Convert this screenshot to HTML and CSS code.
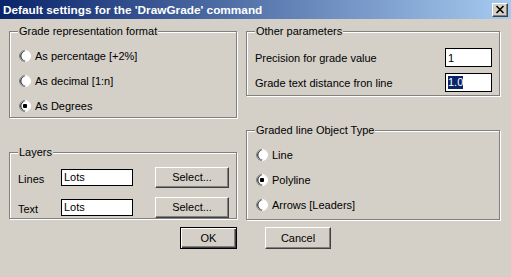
FILE: index.html
```html
<!DOCTYPE html>
<html lang="en">
  <head>
    <meta charset="UTF-8" />
    <title>Default settings for the 'DrawGrade' command</title>
    <link rel="stylesheet" href="styles.css">
  </head>
  <body>
    <div class="dialog">
      <!-- Title bar -->
      <div class="titlebar">
        <span class="title">Default settings for the 'DrawGrade' command</span>
        <span class="close">
          <svg width="10" height="9" viewBox="0 0 10 9">
            <path d="M1.5 1 L8.5 8 M8.5 1 L1.5 8" stroke="#000" stroke-width="1.6" fill="none" />
          </svg>
        </span>
      </div>

      <div class="content">
        <!-- Left column -->
        <div class="column">
          <fieldset class="group g-format">
            <legend>Grade representation format</legend>
            <div class="options">
              <label class="radio"><span class="dot"></span>As percentage [+2%]</label>
              <label class="radio"><span class="dot"></span>As decimal [1:n]</label>
              <label class="radio"><span class="dot checked"></span>As Degrees</label>
            </div>
          </fieldset>

          <fieldset class="group g-layers">
            <legend>Layers</legend>
            <div class="layer-rows">
              <div class="layer-row">
                <span class="layer-label">Lines</span>
                <span class="edit layer-edit">Lots</span>
                <span class="btn select">Select...</span>
              </div>
              <div class="layer-row">
                <span class="layer-label">Text</span>
                <span class="edit layer-edit">Lots</span>
                <span class="btn select">Select...</span>
              </div>
            </div>
          </fieldset>
        </div>

        <!-- Right column -->
        <div class="column">
          <fieldset class="group g-params">
            <legend>Other parameters</legend>
            <div class="param-rows">
              <div class="param-row">
                <span>Precision for grade value</span>
                <span class="edit param-edit">1</span>
              </div>
              <div class="param-row">
                <span>Grade text distance fron line</span>
                <span class="edit param-edit"><span class="sel">1.0</span></span>
              </div>
            </div>
          </fieldset>

          <fieldset class="group g-type">
            <legend>Graded line Object Type</legend>
            <div class="options">
              <label class="radio"><span class="dot"></span>Line</label>
              <label class="radio"><span class="dot checked"></span>Polyline</label>
              <label class="radio"><span class="dot"></span>Arrows [Leaders]</label>
            </div>
          </fieldset>
        </div>
      </div>

      <!-- Buttons -->
      <div class="actions">
        <span class="btn default ok">OK</span>
        <span class="btn cancel">Cancel</span>
      </div>
    </div>
  </body>
</html>
```

FILE: styles.css
```css
body {
  margin: 0;
  background: #d4d0c8;
  font-family: 'Liberation Sans', Arial, sans-serif;
  font-size: 11px;
  color: #000;
}
.dialog {
  width: 511px;
  height: 277px;
  background: #d4d0c8;
}
.titlebar {
  height: 19px;
  display: flex;
  align-items: center;
  justify-content: space-between;
  padding: 0 3px 0 3px;
  background: linear-gradient(to right, #0a246a, #a6caf0);
}
.title {
  color: #fff;
  font-weight: bold;
  font-size: 11.8px;
}
.close {
  width: 14px;
  height: 12px;
  display: flex;
  align-items: center;
  justify-content: center;
  background: #d4d0c8;
  border: 1px solid;
  border-color: #fff #404040 #404040 #fff;
  box-shadow: inset -1px -1px #808080;
}
.content {
  display: grid;
  grid-template-columns: 228px 254px;
  column-gap: 9px;
  padding: 6px 0 0 9px;
}
.column {
  display: flex;
  flex-direction: column;
  gap: 28px;
}
.group {
  margin: 0;
  padding: 0;
  min-width: 0;
  box-sizing: border-box;
  border: 1px solid #808080;
  box-shadow: inset 1px 1px #fff, 1px 1px #fff;
}
.group legend {
  margin-left: 8px;
  padding: 0 1px;
  line-height: 13px;
  background: #d4d0c8;
}
.g-format {
  height: 93px;
}
.g-layers {
  height: 73px;
}
.g-params {
  height: 71px;
}
.g-type {
  height: 96px;
}
.options {
  padding: 5px 0 0 9px;
}
.radio {
  height: 25px;
  display: flex;
  align-items: center;
  gap: 4px;
}
.dot {
  width: 12px;
  height: 12px;
  box-sizing: border-box;
  border-radius: 50%;
  background: #fff;
  border: 1px solid;
  border-color: #808080 #fff #fff #808080;
  box-shadow: inset 1px 1px #404040;
  transform: rotate(-45deg);
}
.dot.checked {
  background: radial-gradient(circle, #000 0 2px, #fff 2.5px);
}
.edit {
  box-sizing: border-box;
  background: #fff;
  border: 1px solid #000;
  padding-left: 2px;
  display: flex;
  align-items: center;
}
.sel {
  background: #0a246a;
  color: #fff;
  line-height: 13px;
}
.param-rows {
  padding: 7px 7px 0 8px;
}
.param-row {
  height: 25px;
  display: flex;
  align-items: center;
  justify-content: space-between;
}
.param-edit {
  width: 47px;
  height: 19px;
}
.layer-rows {
  padding: 7px 0 0 8px;
  display: flex;
  flex-direction: column;
  gap: 8px;
}
.layer-row {
  height: 22px;
  display: flex;
  align-items: center;
}
.layer-label {
  width: 43px;
  padding-top: 3px;
}
.layer-edit {
  width: 72px;
  height: 17px;
  margin-right: 22px;
}
.btn {
  box-sizing: border-box;
  display: flex;
  align-items: center;
  justify-content: center;
  background: #d4d0c8;
  border: 1px solid;
  border-color: #fff #404040 #404040 #fff;
  box-shadow: inset -1px -1px #808080;
}
.select {
  width: 74px;
  height: 21px;
}
.btn.default {
  border-color: #000;
  box-shadow: inset 1px 1px #fff, inset -1px -1px #404040, inset -2px -2px #808080;
}
.actions {
  display: flex;
  justify-content: center;
  gap: 28px;
  margin-top: 7px;
}
.ok {
  width: 57px;
  height: 22px;
}
.cancel {
  width: 66px;
  height: 22px;
}
```
